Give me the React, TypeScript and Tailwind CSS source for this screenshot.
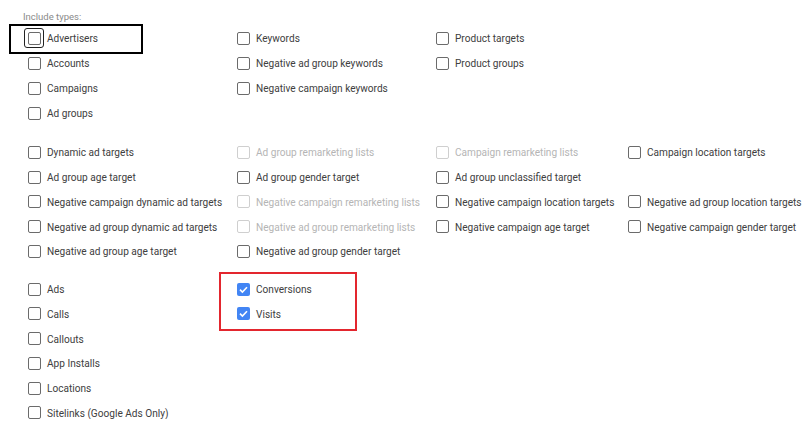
import React from 'react';

type Item = { label: string; disabled?: boolean; checked?: boolean; focused?: boolean } | null;

const groups: Item[][][] = [
  [
    [{ label: 'Advertisers', focused: true }, { label: 'Keywords' }, { label: 'Product targets' }, null],
    [{ label: 'Accounts' }, { label: 'Negative ad group keywords' }, { label: 'Product groups' }, null],
    [{ label: 'Campaigns' }, { label: 'Negative campaign keywords' }, null, null],
    [{ label: 'Ad groups' }, null, null, null],
  ],
  [
    [
      { label: 'Dynamic ad targets' },
      { label: 'Ad group remarketing lists', disabled: true },
      { label: 'Campaign remarketing lists', disabled: true },
      { label: 'Campaign location targets' },
    ],
    [{ label: 'Ad group age target' }, { label: 'Ad group gender target' }, { label: 'Ad group unclassified target' }, null],
    [
      { label: 'Negative campaign dynamic ad targets' },
      { label: 'Negative campaign remarketing lists', disabled: true },
      { label: 'Negative campaign location targets' },
      { label: 'Negative ad group location targets' },
    ],
    [
      { label: 'Negative ad group dynamic ad targets' },
      { label: 'Negative ad group remarketing lists', disabled: true },
      { label: 'Negative campaign age target' },
      { label: 'Negative campaign gender target' },
    ],
    [{ label: 'Negative ad group age target' }, { label: 'Negative ad group gender target' }, null, null],
  ],
  [
    [{ label: 'Ads' }, { label: 'Conversions', checked: true }, null, null],
    [{ label: 'Calls' }, { label: 'Visits', checked: true }, null, null],
    [{ label: 'Callouts' }, null, null, null],
    [{ label: 'App Installs' }, null, null, null],
    [{ label: 'Locations' }, null, null, null],
    [{ label: 'Sitelinks (Google Ads Only)' }, null, null, null],
  ],
];

const Checkbox: React.FC<{ item: NonNullable<Item> }> = ({ item }) => {
  if (item.checked) {
    return (
      <span className="relative w-[13px] h-[13px] rounded-[2px] bg-[#4285f4] flex items-center justify-center shrink-0">
        <svg width="11" height="11" viewBox="0 0 11 11">
          <polyline points="2,5.6 4.4,8 9,3.2" fill="none" stroke="white" strokeWidth="1.6" />
        </svg>
      </span>
    );
  }
  return (
    <span
      className={
        item.disabled
          ? 'relative w-[13px] h-[13px] rounded-[2px] border-[1.5px] border-[#cfcfcf] shrink-0'
          : 'relative w-[13px] h-[13px] rounded-[2px] border-[1.5px] border-[#6b6b6b] shrink-0'
      }
    >
      {item.focused && (
        <span className="absolute -left-[5px] -top-[5px] w-[20px] h-[20px] rounded-[3px] border-[1.5px] border-[#222]" />
      )}
    </span>
  );
};

export default function App() {
  return (
    <div
      className="relative w-[809px] h-[419px] overflow-hidden bg-white"
      style={{ fontFamily: 'Roboto, "Liberation Sans", sans-serif' }}
    >
      <div className="h-[26px] pl-[23px] pt-[11px] text-[9.5px] leading-[12px] text-[#8a8a8a]">Include types:</div>

      {groups.map((rows, gi) => (
        <div key={gi} className={gi === 0 ? '' : gi === 1 ? 'mt-[14px]' : 'mt-[13px]'}>
          {rows.map((row, ri) => (
            <div
              key={ri}
              className={
                gi === 0
                  ? 'grid grid-cols-[209px_199px_192px_1fr] pl-[28px] h-[25px]'
                  : 'grid grid-cols-[209px_199px_192px_1fr] pl-[28px] h-[24.75px]'
              }
            >
              {row.map((item, ci) =>
                item ? (
                  <div key={ci} className="flex items-center gap-[6px] whitespace-nowrap">
                    <Checkbox item={item} />
                    <span
                      className={
                        item.disabled
                          ? 'text-[10.1px] text-[#b5b5b5] pt-[1px]'
                          : 'text-[10.1px] text-[#404040] pt-[1px]'
                      }
                    >
                      {item.label}
                    </span>
                  </div>
                ) : (
                  <div key={ci} />
                )
              )}
            </div>
          ))}
        </div>
      ))}

      {/* annotation boxes */}
      <div className="absolute left-[9px] top-[24px] w-[134px] h-[30px] border-2 border-black" />
      <div className="absolute left-[219px] top-[272px] w-[138px] h-[59px] border-2 border-[#e3262e]" />
    </div>
  );
}
